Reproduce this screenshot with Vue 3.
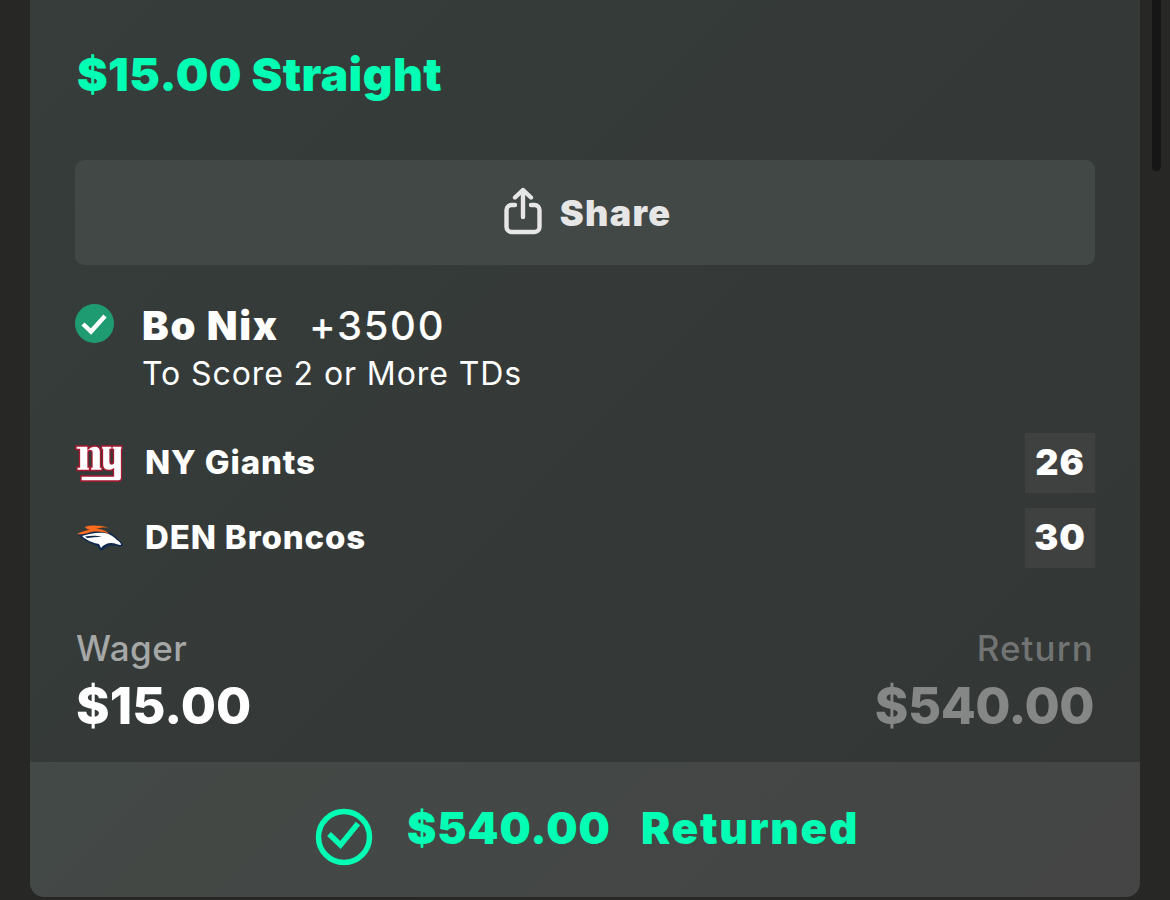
<script setup>
const teams = [
  { name: 'NY Giants', score: 26, logo: 'ny' },
  { name: 'DEN Broncos', score: 30, logo: 'den' },
]
</script>

<template>
  <div class="page">
    <div class="scrollbar"></div>
    <section class="card">
      <div class="body">
        <h1 class="title">$15.00 Straight</h1>
        <button class="share">
          <svg class="share-icon" viewBox="0 0 38 48" fill="none" stroke="#e6e6e6" stroke-width="4.4" stroke-linecap="round" stroke-linejoin="round">
            <path d="M11 18H7.500A5 5 0 0 0 2.500 23V40A5 5 0 0 0 7.500 45H30.500A5 5 0 0 0 35.500 40V23A5 5 0 0 0 30.500 18H27" />
            <path d="M19 30V3M11 10.500L19 3L27 10.500" />
          </svg>
          <span>Share</span>
        </button>
        <div class="pick">
          <svg class="pick-check" viewBox="0 0 39 39">
            <circle cx="19.500" cy="19.500" r="19.500" fill="#1f9b72" />
            <path d="M8 20L16 27.500L30 12" fill="none" stroke="#fff" stroke-width="4.400" />
          </svg>
          <div class="pick-text">
            <div class="pick-head"><strong>Bo Nix</strong><span>+3500</span></div>
            <div class="pick-market">To Score 2 or More TDs</div>
          </div>
        </div>
        <div class="teams">
          <div v-for="t in teams" :key="t.name" class="team">
            <svg v-if="t.logo === 'ny'" class="logo" viewBox="0 0 48 37">
              <path fill="#fff" stroke="#a71930" stroke-width="1.300" d="M1 1H13V4C15 1.500 17 1 19.500 1C23.500 1 25.500 3.500 25.500 7V22H27V25.500H15.500V22H17V7.500C17 6 16 5.500 15 5.500C13.500 5.500 13 6.500 13 7.500V22H14.500V25.500H2V22H4.500V4.500H1Z" />
              <path fill="#fff" stroke="#a71930" stroke-width="1.300" d="M26.500 1H37V4.500H35V17C35 18.500 35.500 19 36.500 19C37.500 19 38.500 18.500 38.500 17V4.500H37V1H47V4.500H46.500V33C46.500 35 45.500 36 43.500 36H6V31H38.500V24C37 25 36 25.500 34 25.500C29.500 25.500 27.500 23 27.500 19V4.500H26.500Z" />
            </svg>
            <svg v-else class="logo" viewBox="0 0 48 37">
              <path fill="#0f2a4d" d="M2 14C10 10 24 9 33 12C39 14 42 18 44 20C46 22 48 23 48 26C45 27 41 26 38 25.500C34 25.500 31 27 28 30L25 30.500L23 26.500C16 24 8 20 2 14Z" />
              <path fill="#fff" d="M7 16C14 14 22 12 30 13C35 14 39 17 42 20C44 21 46 23 46 25C43 25 40 23 36 23C32 23 28 25 26 28L24 24C18 23 11 20 7 16Z" />
              <path fill="#0f2a4d" d="M10 16.500C16 15.500 22 15.500 27 17C22 17 16 17.500 12 18Z" />
              <path fill="#fb6a1d" d="M2 14C8 11 12 10 15 10C12 9 10 8 10 7C16 5 25 5 34 8C28 7 24 8 21 9C27 9 32 11 34 14C27 11 19 11 13 13C9 14 5 15 2 14Z" />
            </svg>
            <span class="team-name">{{ t.name }}</span>
            <span class="score">{{ t.score }}</span>
          </div>
        </div>
        <div class="totals">
          <div>
            <div class="label">Wager</div>
            <div class="amount">$15.00</div>
          </div>
          <div class="right">
            <div class="label">Return</div>
            <div class="amount">$540.00</div>
          </div>
        </div>
      </div>
      <footer class="footer">
        <svg class="ok" viewBox="0 0 58 58" fill="none" stroke="#03ffb4" stroke-width="5.500">
          <circle cx="29" cy="29" r="25.500" />
          <path d="M14 26L25.500 37L43 15.500" />
        </svg>
        <span class="foot-amount">$540.00</span>
        <span class="foot-label">Returned</span>
      </footer>
    </section>
  </div>
</template>

<style>
html, body { margin: 0; background: #272726; overflow: hidden; }
</style>

<style scoped>
.page {
  position: relative;
  height: 900px;
  padding: 0 30px;
  box-sizing: border-box;
  overflow: hidden;
  background: #272726;
  font-family: Inter, "Liberation Sans", sans-serif;
}
.scrollbar {
  position: absolute;
  left: 1152px;
  top: 0;
  width: 9px;
  height: 171px;
  background: #161616;
  border-radius: 0 0 5px 5px;
}
.card {
  width: 1110px;
  margin-top: -12px;
  height: 909px;
  border-radius: 14px;
  background: linear-gradient(135deg, #363d3b, #333635);
  display: flex;
  flex-direction: column;
  overflow: hidden;
}
.body {
  flex: 1;
  padding: 12px 45px 0;
}
.title {
  margin: 43px 0 0 2px;
  font-size: 46px;
  line-height: 62px;
  font-weight: 900;
  letter-spacing: 0.45px;
  color: #03ffb4;
}
.share {
  width: 100%;
  height: 105px;
  margin-top: 55px;
  display: flex;
  align-items: center;
  justify-content: center;
  gap: 18px;
  border: 0;
  border-radius: 9px;
  background: #424845;
  color: #e6e6e6;
  font: 900 36px Inter, "Liberation Sans", sans-serif;
  letter-spacing: 1.3px;
  padding: 0 0 0 5px;
}
.share-icon { width: 38px; height: 48px; margin-top: -4px; }
.pick {
  display: flex;
  gap: 28px;
  margin-top: 39px;
}
.pick-check { width: 39px; height: 39px; flex: none; }
.pick-text { color: #fff; }
.pick-head {
  display: flex;
  gap: 30px;
  font-size: 40px;
  line-height: 44px;
  letter-spacing: 1.7px;
  font-weight: 500;
}
.pick-head strong { font-weight: 900; letter-spacing: 1.7px; }
.pick-market {
  font-size: 32px;
  line-height: 38px;
  margin-top: 7px;
  letter-spacing: 0.9px;
}
.teams {
  display: flex;
  flex-direction: column;
  gap: 15px;
  margin-top: 40px;
}
.team {
  display: flex;
  align-items: center;
  height: 60px;
}
.logo { width: 48px; height: 37px; flex: none; }
.team-name {
  margin: -2px 0 0 22px;
  font-size: 33px;
  font-weight: 800;
  letter-spacing: 0.85px;
  color: #fff;
  flex: 1;
}
.score {
  width: 70px;
  height: 60px;
  box-sizing: border-box;
  padding-bottom: 2px;
  display: flex;
  align-items: center;
  justify-content: center;
  background: #3f4140;
  font-size: 36px;
  font-weight: 900;
  color: #fff;
  letter-spacing: 1px;
}
.totals {
  display: flex;
  justify-content: space-between;
  margin: 59px 1px 0 1px;
}
.label {
  font-size: 35px;
  line-height: 42px;
  font-weight: 500;
  letter-spacing: 0.5px;
  color: #a6a8a7;
}
.amount {
  font-size: 51px;
  line-height: 60px;
  font-weight: 800;
  color: #fff;
  margin-top: 7px;
}
.right { text-align: right; }
.right .label { color: #717473; letter-spacing: 1.1px; }
.right .amount { color: #858786; letter-spacing: -0.5px; }
.footer {
  height: 135px;
  flex: none;
  box-sizing: border-box;
  padding: 0 0 4px 4px;
  background: linear-gradient(135deg, #434946, #444544);
  border-radius: 0 0 14px 14px;
  display: flex;
  align-items: center;
  justify-content: center;
  color: #03ffb4;
  font-size: 44px;
  font-weight: 900;
  letter-spacing: 1px;
}
.ok { width: 58px; height: 58px; margin-right: 34px; margin-top: 18px; }
.foot-label { margin-left: 30px; letter-spacing: 1.7px; }
</style>
